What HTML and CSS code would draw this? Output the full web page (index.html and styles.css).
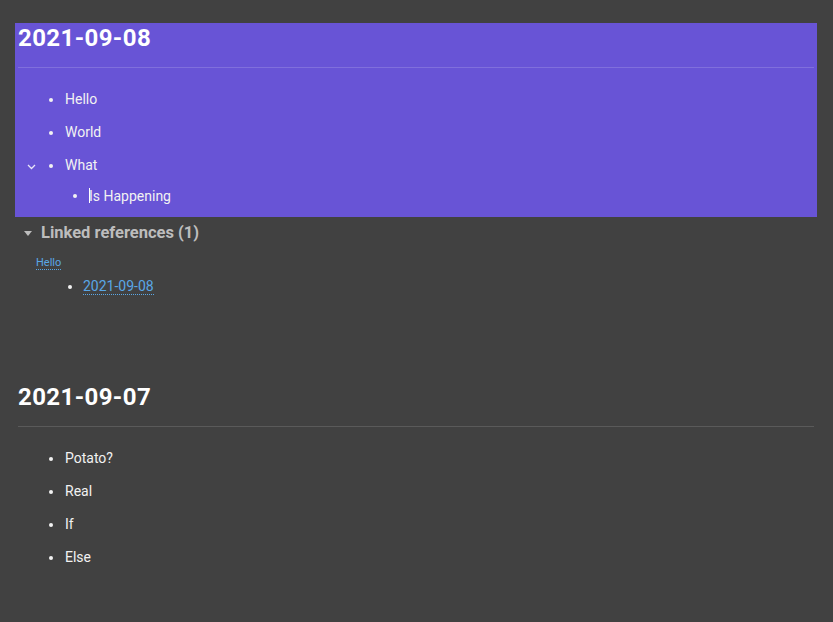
FILE: index.html
```html
<!DOCTYPE html>
<html>
<head>
<meta charset="utf-8">
<link rel="stylesheet" href="styles.css">
</head>
<body>
<div class="page selected">
  <h1 class="title">2021-09-08</h1>
  <div class="rule"></div>
  <ul class="blocks">
    <li>Hello</li>
    <li>World</li>
    <li class="open"><span class="chev"><svg width="9" height="6" viewBox="0 0 9 6"><path d="M1 1 L4.5 4.5 L8 1" fill="none" stroke="#e8e6f8" stroke-width="1.3"/></svg></span>What
      <ul class="blocks sub">
        <li><span class="caret"></span>Is Happening</li>
      </ul>
    </li>
  </ul>
</div>
<div class="refs">
  <div class="refs-head"><span class="tri"></span>Linked references (1)</div>
  <a class="ref-page">Hello</a>
  <ul class="blocks ref-list">
    <li><a class="ref-link">2021-09-08</a></li>
  </ul>
</div>
<div class="page second">
  <h1 class="title">2021-09-07</h1>
  <div class="rule dark"></div>
  <ul class="blocks">
    <li>Potato?</li>
    <li>Real</li>
    <li>If</li>
    <li>Else</li>
  </ul>
</div>
</body>
</html>
```
FILE: styles.css
```css
html, body {
  margin: 0;
  background: #414141;
}
body {
  padding: 23px 16px 0 15px;
  font-family: Roboto, "Liberation Sans", sans-serif;
  color: #f2f2f2;
}
.page {
  padding: 1px 3px 4px 3px;
}
.selected {
  background: #6854d6;
  padding-bottom: 7px;
}
.second {
  margin-top: 79px;
}
.title {
  margin: 0;
  font-size: 24px;
  line-height: 28px;
  font-weight: 700;
  letter-spacing: 0.4px;
  color: #ffffff;
}
.rule {
  margin-top: 15px;
  height: 1px;
  background: rgba(255, 255, 255, 0.16);
}
.rule.dark {
  background: #5a5a5a;
}
.blocks {
  list-style: none;
  margin: 15px 0 0 0;
  padding: 0 0 0 47px;
  font-size: 14px;
  line-height: 33px;
}
.blocks li {
  position: relative;
}
.blocks li::before {
  content: "";
  position: absolute;
  left: -16px;
  top: 15px;
  width: 4px;
  height: 4px;
  border-radius: 50%;
  background: #f2f2f2;
}
.blocks.sub {
  margin: 0;
  padding-left: 24px;
  line-height: 28px;
}
.blocks.sub li::before {
  top: 12px;
}
.chev {
  position: absolute;
  left: -38px;
  top: 15px;
  line-height: 0;
}
.caret {
  position: absolute;
  left: 0;
  top: 6px;
  width: 1px;
  height: 15px;
  background: #ffffff;
}
.refs {
  padding-left: 9px;
}
.refs-head {
  margin-top: 6px;
  display: flex;
  align-items: center;
  gap: 9px;
  font-size: 16.5px;
  line-height: 20px;
  font-weight: 700;
  color: #bdbdbd;
}
.tri {
  width: 0;
  height: 0;
  border-left: 4px solid transparent;
  border-right: 4px solid transparent;
  border-top: 5px solid #bdbdbd;
  margin-top: 1px;
}
.ref-page {
  display: inline-block;
  margin: 13px 0 0 12px;
  font-size: 11px;
  line-height: 13px;
  color: #5aa7e6;
  border-bottom: 1px dotted #5aa7e6;
}
.ref-list {
  margin: 0;
  padding-left: 59px;
}
.ref-list li::before {
  left: -15px;
}
.ref-link {
  color: #5aa7e6;
  border-bottom: 1px dotted #5aa7e6;
}
```
